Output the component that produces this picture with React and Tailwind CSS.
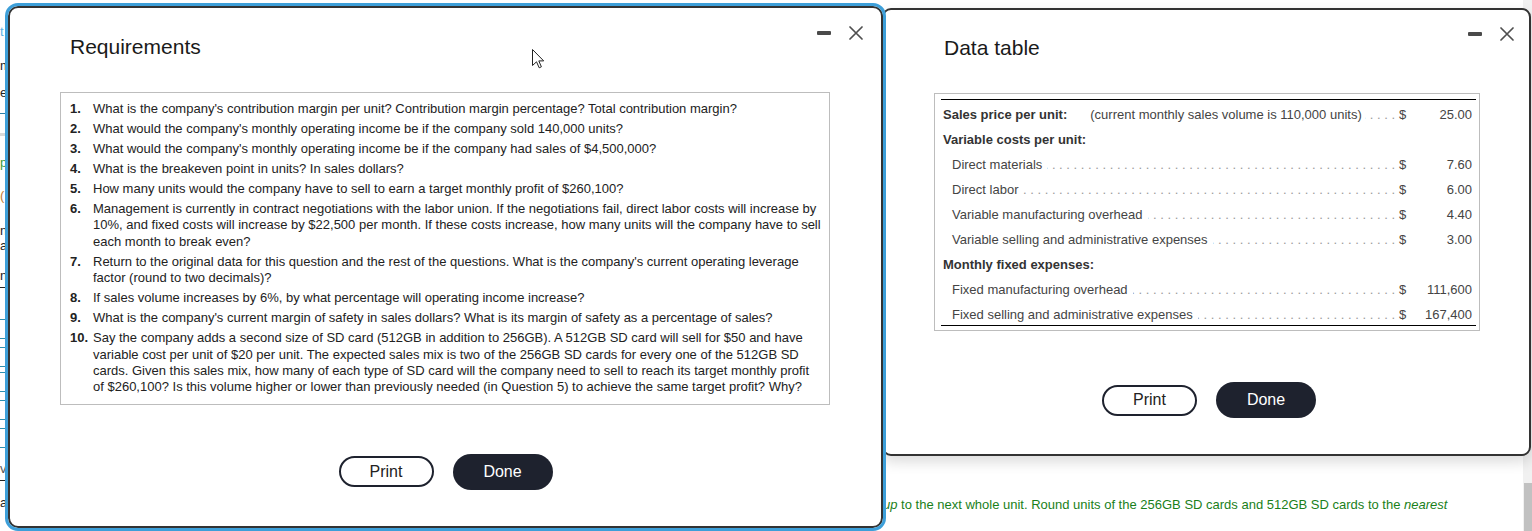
import React from "react";

const requirements = [
  { n: "1.", lines: ["What is the company's contribution margin per unit? Contribution margin percentage? Total contribution margin?"] },
  { n: "2.", lines: ["What would the company's monthly operating income be if the company sold 140,000 units?"] },
  { n: "3.", lines: ["What would the company's monthly operating income be if the company had sales of $4,500,000?"] },
  { n: "4.", lines: ["What is the breakeven point in units? In sales dollars?"] },
  { n: "5.", lines: ["How many units would the company have to sell to earn a target monthly profit of $260,100?"] },
  {
    n: "6.",
    lines: [
      "Management is currently in contract negotiations with the labor union. If the negotiations fail, direct labor costs will increase by",
      "10%, and fixed costs will increase by $22,500 per month. If these costs increase, how many units will the company have to sell",
      "each month to break even?",
    ],
  },
  {
    n: "7.",
    lines: [
      "Return to the original data for this question and the rest of the questions. What is the company's current operating leverage",
      "factor (round to two decimals)?",
    ],
  },
  { n: "8.", lines: ["If sales volume increases by 6%, by what percentage will operating income increase?"] },
  { n: "9.", lines: ["What is the company's current margin of safety in sales dollars? What is its margin of safety as a percentage of sales?"] },
  {
    n: "10.",
    lines: [
      "Say the company adds a second size of SD card (512GB in addition to 256GB). A 512GB SD card will sell for $50 and have",
      "variable cost per unit of $20 per unit. The expected sales mix is two of the 256GB SD cards for every one of the 512GB SD",
      "cards. Given this sales mix, how many of each type of SD card will the company need to sell to reach its target monthly profit",
      "of $260,100? Is this volume higher or lower than previously needed (in Question 5) to achieve the same target profit? Why?",
    ],
  },
];

const rows = [
  { head: true, label: "Sales price per unit:", note: "(current monthly sales volume is 110,000 units)", value: "25.00" },
  { head: true, label: "Variable costs per unit:" },
  { label: "Direct materials", value: "7.60" },
  { label: "Direct labor", value: "6.00" },
  { label: "Variable manufacturing overhead", value: "4.40" },
  { label: "Variable selling and administrative expenses", value: "3.00" },
  { head: true, label: "Monthly fixed expenses:" },
  { label: "Fixed manufacturing overhead", value: "111,600" },
  { label: "Fixed selling and administrative expenses", value: "167,400" },
];

const DOTS = Array(90).fill(".").join(" ");

function WindowControls({ pad }) {
  return (
    <div className={`flex items-center gap-[18px] ${pad}`}>
      <div className="h-[4px] w-[14px] rounded-[1px] bg-[#4a4a4a]" />
      <svg width="14" height="14" viewBox="0 0 14 14" className="block">
        <path d="M1 1 L13 13 M13 1 L1 13" stroke="#4f4f4f" strokeWidth="1.7" strokeLinecap="round" />
      </svg>
    </div>
  );
}

function Buttons({ mt }) {
  return (
    <div className={`flex items-center justify-center gap-[19px] ${mt}`}>
      <button className="h-[31px] w-[95px] rounded-full border-2 border-[#1e222e] bg-white text-[16px] text-[#222]">
        Print
      </button>
      <button className="h-[36px] w-[100px] rounded-full bg-[#1e222e] text-[16px] text-white">Done</button>
    </div>
  );
}

function Leader() {
  return (
    <span className="flex min-w-0 flex-1 justify-end overflow-hidden whitespace-nowrap text-[#9a9a9a]">
      <span className="shrink-0">{DOTS}</span>
    </span>
  );
}

function DataRow({ row }) {
  return (
    <div className="flex h-[25px] items-center pt-[4px] leading-[15px]">
      <div className="flex min-w-0 flex-1 items-center pr-[1px]">
        {row.head ? (
          <>
            <span className="shrink-0 pl-[2px] font-bold text-[#333]">{row.label}</span>
            {row.note && <span className="ml-[23px] shrink-0 pr-[3px] text-[#444]">{row.note}</span>}
            {row.note && <Leader />}
          </>
        ) : (
          <>
            <span className="shrink-0 pl-[11px] pr-[5px] text-[#444]">{row.label}</span>
            <Leader />
          </>
        )}
      </div>
      <div className="w-[14px] pl-[3px] text-[#444]">{row.value ? "$" : ""}</div>
      <div className="w-[66px] pr-[4px] text-right text-[#444]">{row.value || ""}</div>
    </div>
  );
}

function Cursor() {
  return (
    <svg width="13" height="20" viewBox="0 0 13 20" className="absolute left-[532px] top-[49px]">
      <path
        d="M0.5 0.5 V16.5 L4.5 12.8 L7.2 18.8 L9.4 17.8 L6.8 11.9 H11.7 Z"
        fill="white"
        stroke="#222"
        strokeWidth="1"
        strokeLinejoin="miter"
      />
    </svg>
  );
}

function LeftStrip() {
  return (
    <div className="flex w-[8px] shrink-0 flex-col overflow-hidden text-[13px] leading-[12px]">
      <div className="h-[26px]" />
      <div className="h-[12px] text-[#5ab2e6]">t</div>
      <div className="h-[22px]" />
      <div className="h-[12px] text-[#222]">m</div>
      <div className="h-[15px]" />
      <div className="h-[12px] text-[#222]">er</div>
      <div className="h-[14px]" />
      <div className="h-[1px] bg-[#2b7fa6]" />
      <div className="h-[19px]" />
      <div className="h-[3px] bg-[#d9d9d9]" />
      <div className="h-[21px]" />
      <div className="h-[12px] text-[#3a9a3a]">p</div>
      <div className="h-[21px]" />
      <div className="h-[12px] text-[#c07a30]">(</div>
      <div className="h-[23px]" />
      <div className="h-[12px] text-[#222]">n</div>
      <div className="h-[3px]" />
      <div className="h-[12px] text-[#222]">a</div>
      <div className="h-[18px]" />
      <div className="h-[12px] text-[#222]">n</div>
      <div className="h-[5px]" />
      <div className="h-[1px] bg-[#222]" />
      <div className="h-[31px]" />
      <div className="h-[1px] bg-[#2b8fb0]" />
      <div className="h-[18px]" />
      <div className="h-[1px] bg-[#2b8fb0]" />
      <div className="h-[8px]" />
      <div className="h-[1px] bg-[#2b8fb0]" />
      <div className="h-[18px]" />
      <div className="h-[1px] bg-[#2b8fb0]" />
      <div className="h-[5px]" />
      <div className="h-[1px] bg-[#2b8fb0]" />
      <div className="h-[18px]" />
      <div className="h-[1px] bg-[#2b8fb0]" />
      <div className="h-[8px]" />
      <div className="h-[1px] bg-[#2b8fb0]" />
      <div className="h-[18px]" />
      <div className="h-[1px] bg-[#2b8fb0]" />
      <div className="h-[8px]" />
      <div className="h-[1px] bg-[#2b8fb0]" />
      <div className="h-[18px]" />
      <div className="h-[1px] bg-[#2b8fb0]" />
      <div className="h-[15px]" />
      <div className="h-[12px] text-[#555]">v</div>
      <div className="h-[5px]" />
      <div className="h-[1px] bg-[#222]" />
      <div className="h-[16px]" />
      <div className="h-[12px] text-[#222]">a</div>
    </div>
  );
}

export default function App() {
  return (
    <div className="relative h-[531px] w-[1532px] overflow-hidden bg-white font-['Liberation_Sans',Arial,sans-serif]">
      {/* page behind the dialogs */}
      <div className="flex h-full">
        <LeftStrip />
        <div className="flex-1 pl-[875px] pt-[497px]">
          <p className="whitespace-nowrap text-[13px] leading-[16px] text-[#1a7f1a]">
            <i>up</i> to the next whole unit. Round units of the 256GB SD cards and 512GB SD cards to the <i>nearest</i>
          </p>
        </div>
        <div className="flex w-[9px] shrink-0 flex-col bg-[#f1f1f1]">
          <div className="ml-[1px] mt-[483px] h-[48px] bg-[#c1c1c1]" />
        </div>
      </div>

      {/* Data table window */}
      <div className="absolute left-[882px] top-[8px] flex h-[448px] w-[649px] flex-col rounded-[9px] border-2 border-[#333] bg-white shadow-[0_6px_14px_rgba(0,0,0,0.14)]">
        <div className="flex items-start justify-between">
          <h2 className="pl-[60px] pt-[26px] text-[21px] font-normal leading-[24px] text-[#1a1a1a]">Data table</h2>
          <WindowControls pad="pt-[17px] pr-[15px]" />
        </div>
        <div className="ml-[50px] mt-[33px] w-[546px] border border-[#bdbdbd] pb-[4px] pl-[6px] pr-[3px] pt-[5px] text-[13px]">
          <div className="border-y border-black">
            {rows.map((row, i) => (
              <DataRow key={i} row={row} />
            ))}
          </div>
        </div>
        <div className="pl-[5px]">
          <Buttons mt="mt-[51px]" />
        </div>
      </div>

      {/* Requirements window (focused) */}
      <div className="absolute left-[8px] top-[6px] flex h-[522px] w-[875px] flex-col rounded-[10px] border-2 border-[#333] bg-white outline-[3px] outline-solid outline-[#3d9fd9]">
        <div className="flex items-start justify-between">
          <h2 className="pl-[60px] pt-[27px] text-[21px] font-normal leading-[24px] text-[#1a1a1a]">Requirements</h2>
          <WindowControls pad="pt-[18px] pr-[18px]" />
        </div>
        <div className="ml-[50px] mt-[33px] w-[770px] border border-[#bdbdbd] pb-[8px] pl-[9px] pr-[1px] pt-[8px] text-[13px] leading-[16.4px] text-[#222]">
          <ol className="flex flex-col gap-[3.6px]">
            {requirements.map((item) => (
              <li key={item.n} className="flex">
                <span className="w-[23px] shrink-0 font-bold">{item.n}</span>
                <span className="flex flex-col">
                  {item.lines.map((line, j) => (
                    <span key={j} className="whitespace-nowrap">
                      {line}
                    </span>
                  ))}
                </span>
              </li>
            ))}
          </ol>
        </div>
        <Buttons mt="mt-[49px]" />
      </div>

      <Cursor />
    </div>
  );
}
